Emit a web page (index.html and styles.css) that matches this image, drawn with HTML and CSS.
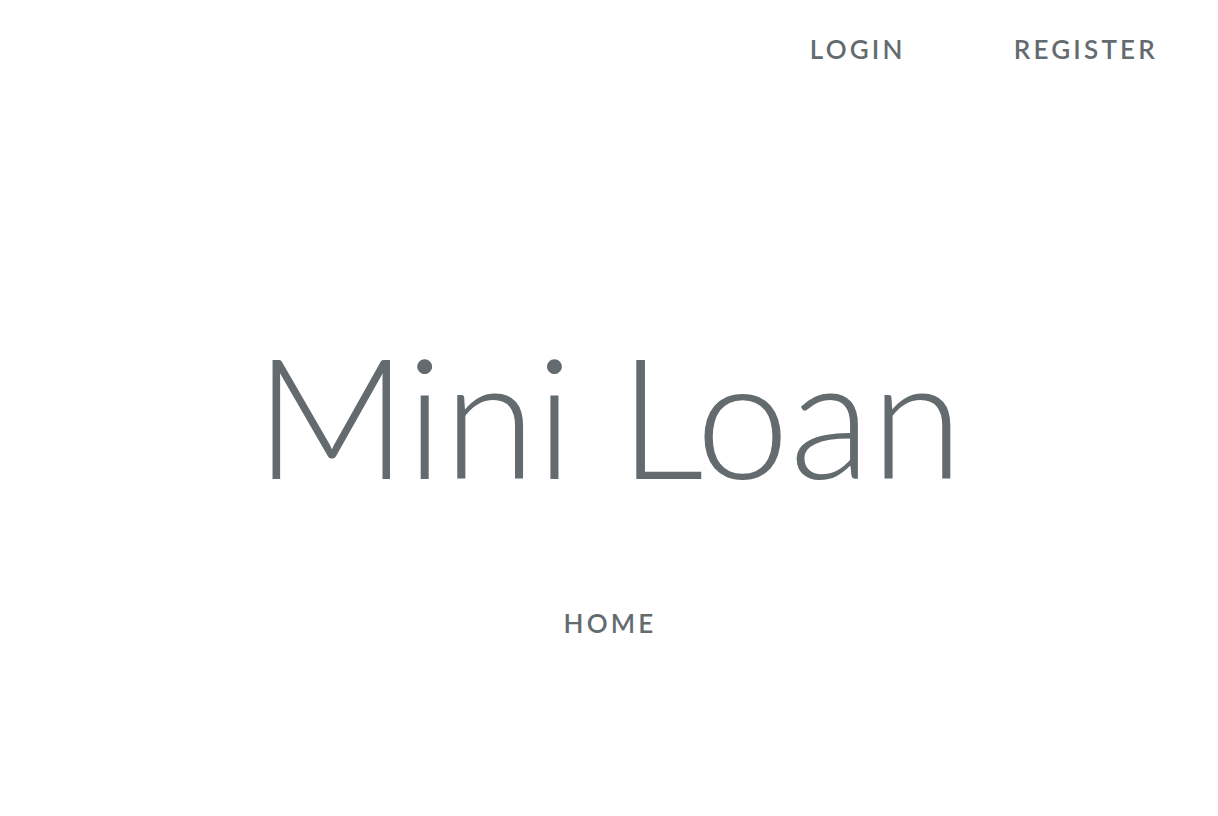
FILE: index.html
```html
<!DOCTYPE html>
<html lang="en">
<head>
<meta charset="utf-8">
<title>Mini Loan</title>
<link rel="stylesheet" href="styles.css">
</head>
<body>
<div class="page">
  <header class="top-right">
    <a class="link" href="#">Login</a>
    <a class="link" href="#">Register</a>
  </header>
  <main class="content">
    <div class="title">Mini Loan</div>
    <nav class="links">
      <a class="link" href="#">Home</a>
    </nav>
  </main>
</div>
</body>
</html>
```
FILE: styles.css
```css
html, body {
  margin: 0;
  padding: 0;
  background: #fff;
  color: #636b6f;
  font-family: "Lato", "Noto Sans", sans-serif;
  height: 100%;
}
.page {
  height: 100vh;
  display: flex;
  flex-direction: column;
}
.top-right {
  display: flex;
  justify-content: flex-end;
  gap: 108px;
  padding: 34px 60px 0 0;
  height: 30px;
}
.link {
  color: #636b6f;
  text-decoration: none;
  font-size: 26px;
  font-weight: 600;
  letter-spacing: 3.2px;
  text-transform: uppercase;
  line-height: 30px;
}
.content {
  flex: 1;
  display: flex;
  flex-direction: column;
  align-items: center;
  padding-top: 266px;
}
.title {
  font-size: 168px;
  font-weight: 300;
  line-height: 1;
  margin-bottom: 110px;
}
.links {
  display: flex;
  padding-left: 2px;
}
```
